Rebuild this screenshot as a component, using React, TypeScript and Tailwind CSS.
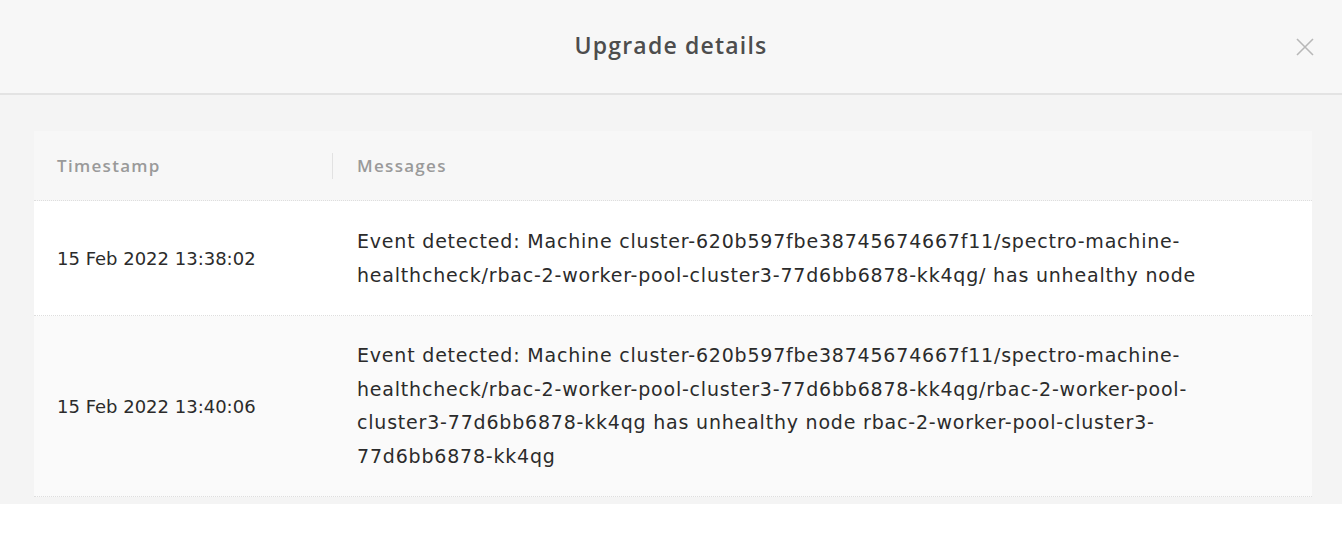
import React from "react";

export default function App() {
  const font = { fontFamily: '"Open Sans", "Liberation Sans", sans-serif' };
  const body = { fontFamily: '"DejaVu Sans", "Open Sans", sans-serif' };
  return (
    <div className="w-[1342px] h-[540px] bg-white overflow-hidden" style={font}>
      <div className="h-[95px] bg-[#f7f7f7] border-b-2 border-[#e3e3e3] relative flex items-center justify-center">
        <div className="text-[23px] font-semibold text-[#4d4d4d] tracking-[1.2px] -mt-[3px]">Upgrade details</div>
        <svg className="absolute right-[28px] top-[38px]" width="18" height="18" viewBox="0 0 18 18">
          <path d="M1 1 L17 17 M17 1 L1 17" stroke="#b8b8b8" strokeWidth="1.6" />
        </svg>
      </div>
      <div className="h-[409px] bg-[#f4f4f4] pt-[36px] px-[34px] pr-[30px]">
        <div className="w-[1278px]">
          <div className="h-[70px] bg-[#f7f7f7] flex items-center border-b border-dotted border-[#dedede] text-[17px] font-semibold text-[#9a9a9a] tracking-[1.3px]">
            <div className="w-[299px] pl-[23px] border-r border-[#e2e2e2] h-[26px] flex items-center">Timestamp</div>
            <div className="pl-[24px]">Messages</div>
          </div>
          <div className="h-[115px] bg-white flex items-center border-b border-dotted border-[#dedede] text-[#2b2b2b]" style={body}>
            <div className="w-[299px] pl-[23px] text-[18px]">15 Feb 2022 13:38:02</div>
            <div className="pl-[24px] leading-[34px] text-[19px] tracking-[0.8px]">
              Event detected: Machine cluster-620b597fbe38745674667f11/spectro-machine-<br />
              healthcheck/rbac-2-worker-pool-cluster3-77d6bb6878-kk4qg/ has unhealthy node
            </div>
          </div>
          <div className="h-[181px] bg-[#fafafa] flex items-center border-b border-dotted border-[#dedede] text-[#2b2b2b]" style={body}>
            <div className="w-[299px] pl-[23px] text-[18px]">15 Feb 2022 13:40:06</div>
            <div className="pl-[24px] leading-[33.5px] text-[19px] tracking-[0.8px]">
              Event detected: Machine cluster-620b597fbe38745674667f11/spectro-machine-<br />
              healthcheck/rbac-2-worker-pool-cluster3-77d6bb6878-kk4qg/rbac-2-worker-pool-<br />
              cluster3-77d6bb6878-kk4qg has unhealthy node rbac-2-worker-pool-cluster3-<br />
              77d6bb6878-kk4qg
            </div>
          </div>
        </div>
      </div>
    </div>
  );
}
